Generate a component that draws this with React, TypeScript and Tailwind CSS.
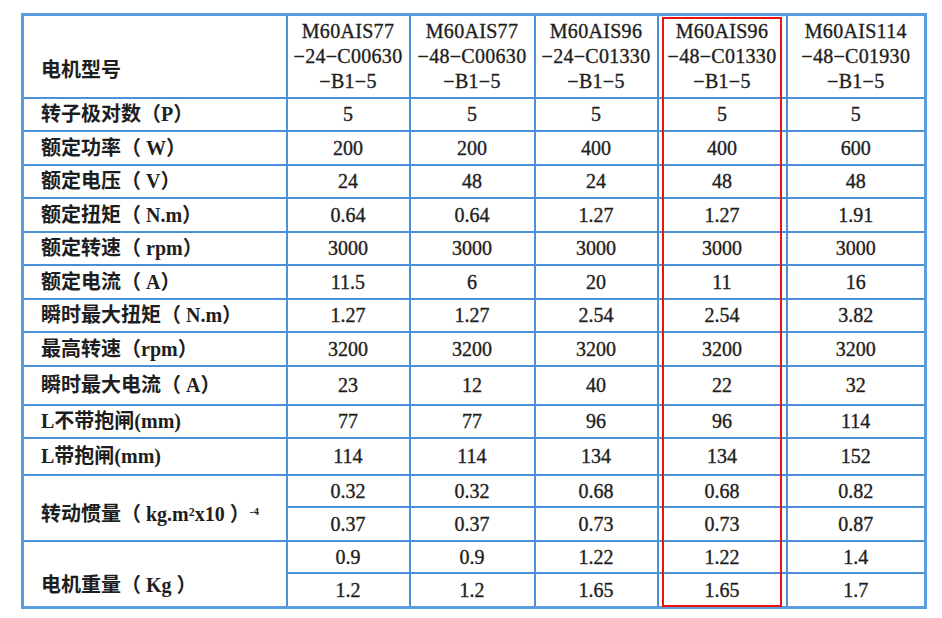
const models = [
  ["M60AIS77", "−24−C00630", "−B1−5"],
  ["M60AIS77", "−48−C00630", "−B1−5"],
  ["M60AIS96", "−24−C01330", "−B1−5"],
  ["M60AIS96", "−48−C01330", "−B1−5"],
  ["M60AIS114", "−48−C01930", "−B1−5"],
];

const rows: { label: string; h: string; values: string[] }[] = [
  { label: "转子极对数（P）", h: "h-[33px]", values: ["5", "5", "5", "5", "5"] },
  { label: "额定功率（ W）", h: "h-[34px]", values: ["200", "200", "400", "400", "600"] },
  { label: "额定电压（ V）", h: "h-[33px]", values: ["24", "48", "24", "48", "48"] },
  { label: "额定扭矩（ N.m）", h: "h-[34px]", values: ["0.64", "0.64", "1.27", "1.27", "1.91"] },
  { label: "额定转速（ rpm）", h: "h-[33px]", values: ["3000", "3000", "3000", "3000", "3000"] },
  { label: "额定电流（ A）", h: "h-[34px]", values: ["11.5", "6", "20", "11", "16"] },
  { label: "瞬时最大扭矩（ N.m）", h: "h-[33px]", values: ["1.27", "1.27", "2.54", "2.54", "3.82"] },
  { label: "最高转速（rpm）", h: "h-[34px]", values: ["3200", "3200", "3200", "3200", "3200"] },
  { label: "瞬时最大电流（ A）", h: "h-[39px]", values: ["23", "12", "40", "22", "32"] },
  { label: "L不带抱闸(mm)", h: "h-[33px]", values: ["77", "77", "96", "96", "114"] },
  { label: "L带抱闸(mm)", h: "h-[37px]", values: ["114", "114", "134", "134", "152"] },
];

// values look a touch heavier than regular in the scan
const cell = "border-2 border-[#4a8fda] text-center [-webkit-text-stroke:0.35px_#1e1e1e]";
const label = "border-2 border-[#4a8fda] pl-[17px] text-left font-bold";

export default function App() {
  return (
    <div className="min-h-screen bg-white pl-[21px] pt-[13px] text-[#1e1e1e] [font-family:'Liberation_Serif','Noto_Sans_CJK_SC',serif]">
      <div className="relative w-[903px]">
        <table className="w-[903px] table-fixed border-collapse border-[3px] border-[#5b9be0] text-[20px]">
          <colgroup>
            <col className="w-[264px]" />
            <col className="w-[123px]" />
            <col className="w-[125px]" />
            <col className="w-[123px]" />
            <col className="w-[129px]" />
            <col className="w-[139px]" />
          </colgroup>
          <tbody>
            <tr className="h-[83px]">
              <td className={`${label} pt-[28px]`}>电机型号</td>
              {models.map((m, i) => (
                <td key={i} className={`${cell} whitespace-nowrap leading-[25px] tracking-[0.3px]`}>
                  {m.map((line, j) => (
                    <div key={j}>{line}</div>
                  ))}
                </td>
              ))}
            </tr>
            {rows.map((r) => (
              <tr key={r.label} className={r.h}>
                <td className={label}>{r.label}</td>
                {r.values.map((v, i) => (
                  <td key={i} className={cell}>
                    {v}
                  </td>
                ))}
              </tr>
            ))}
            <tr className="h-[31px]">
              <td rowSpan={2} className={`${label} pt-[12px]`}>
                转动惯量（ kg.m²x10 ）<sup className="text-[11px]">-4</sup>
              </td>
              {["0.32", "0.32", "0.68", "0.68", "0.82"].map((v, i) => (
                <td key={i} className={cell}>{v}</td>
              ))}
            </tr>
            <tr className="h-[34px]">
              {["0.37", "0.37", "0.73", "0.73", "0.87"].map((v, i) => (
                <td key={i} className={cell}>{v}</td>
              ))}
            </tr>
            <tr className="h-[32px]">
              <td rowSpan={2} className={`${label} pt-[22px]`}>
                电机重量（ Kg ）
              </td>
              {["0.9", "0.9", "1.22", "1.22", "1.4"].map((v, i) => (
                <td key={i} className={cell}>{v}</td>
              ))}
            </tr>
            <tr className="h-[35px]">
              {["1.2", "1.2", "1.65", "1.65", "1.7"].map((v, i) => (
                <td key={i} className={cell}>{v}</td>
              ))}
            </tr>
          </tbody>
        </table>
        <div className="pointer-events-none absolute left-[641px] top-[4px] h-[590px] w-[120px] border-2 border-[#f01010]" />
      </div>
    </div>
  );
}
